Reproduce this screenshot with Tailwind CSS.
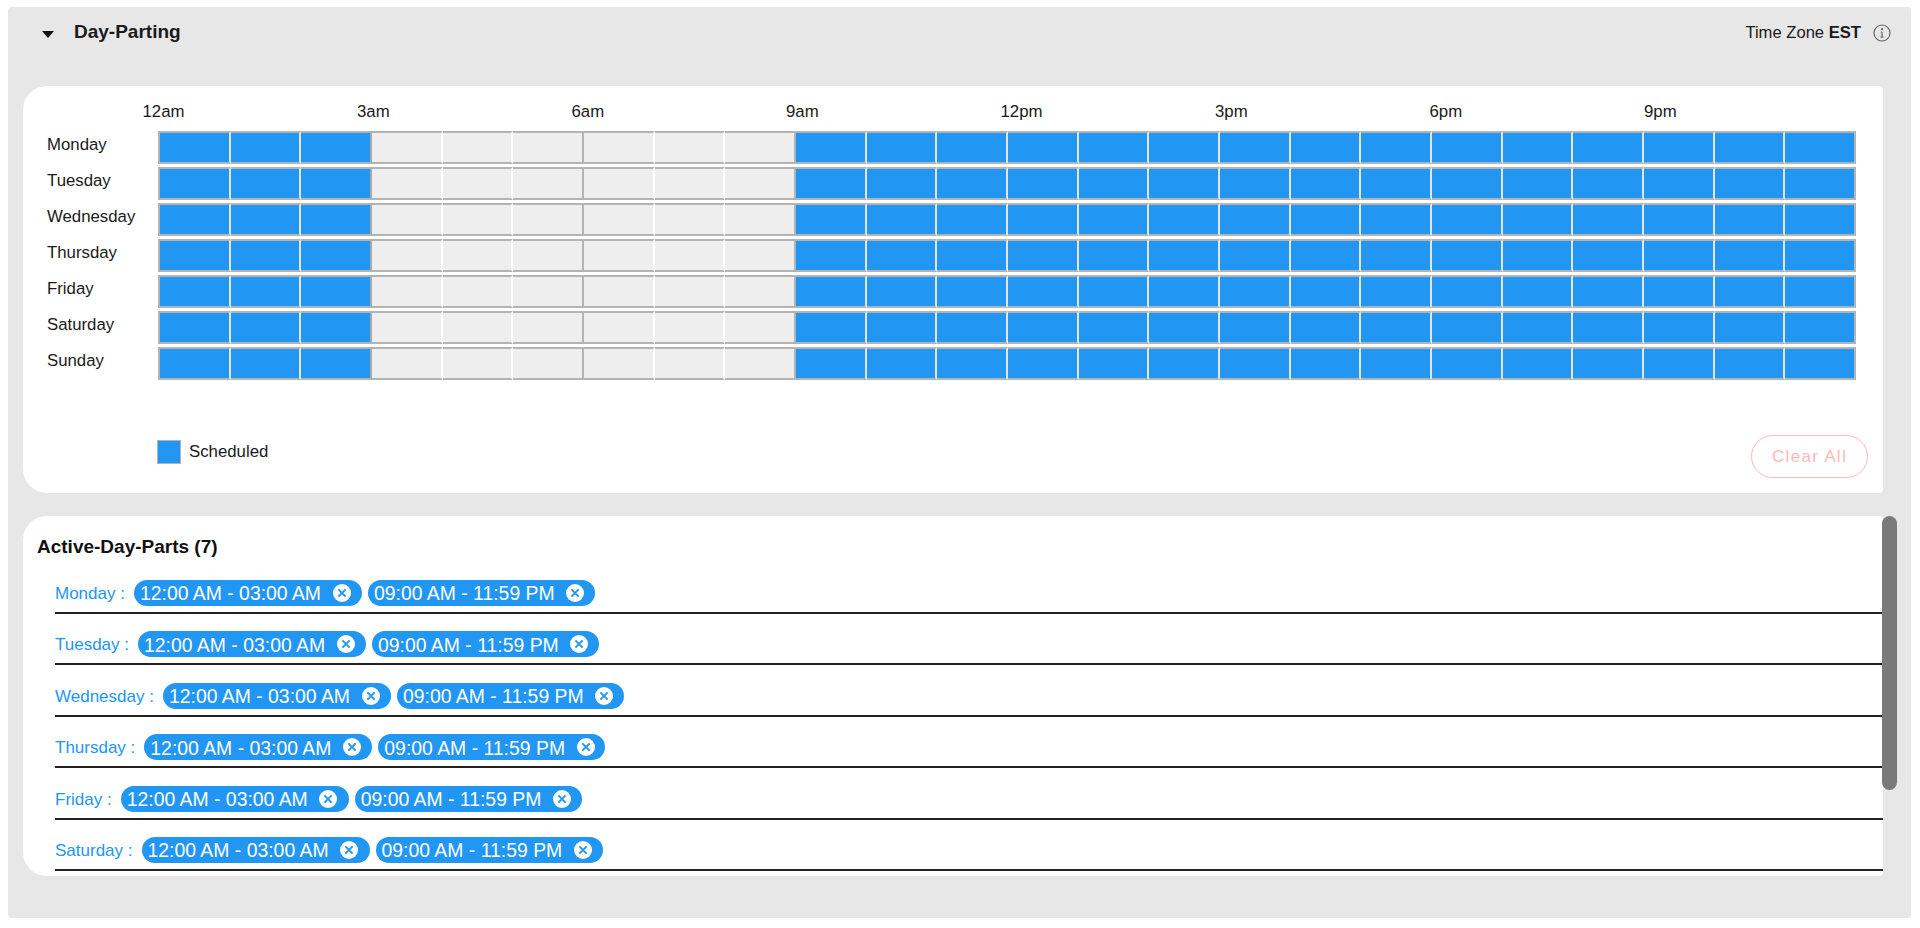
<!DOCTYPE html>
<html>
<head>
<meta charset="utf-8">
<script src="https://cdn.jsdelivr.net/npm/@tailwindcss/browser@4"></script>
</head>
<body class="bg-white font-['Liberation_Sans',Arial,sans-serif] text-[16.8px] text-[#1a1a1a] overflow-hidden">
<div class="relative mt-[7px] ml-[8px] w-[1903px] h-[911px] bg-[#e7e7e7] rounded-[4px]">
  <header class="flex items-center justify-between h-[50px] pl-[34px] pr-[20px]">
    <div class="flex items-center gap-[20px]">
      <svg class="w-[12px] h-[7px] mt-[4px]" viewBox="0 0 12 7"><path d="M0 0H12L6 7Z" fill="#111"/></svg>
      <span class="text-[19px] font-bold leading-[24px] -mt-[1px]">Day-Parting</span>
    </div>
    <div class="flex items-center gap-[12px] mt-[2px]">
      <span class="leading-[20px] text-[16.6px]">Time Zone <b>EST</b></span>
      <svg class="w-[18px] h-[18px]" viewBox="0 0 18 18" fill="none" stroke="#666" stroke-width="1.2"><circle cx="9" cy="9" r="8"/><path d="M9 8v5M7.6 13.2h2.8M7.8 8h1.2"/><circle cx="9" cy="5.2" r=".5" fill="#666"/></svg>
    </div>
  </header>

  <section class="relative mt-[29px] ml-[15px] w-[1860px] h-[407px] bg-white rounded-l-[24px] rounded-r-[4px] pt-[16px]">
    <div class="flex pl-[119.5px] h-[20px] leading-[20px]">
      <span class="w-[214.5px]">12am</span><span class="w-[214.5px]">3am</span><span class="w-[214.5px]">6am</span><span class="w-[214.5px]">9am</span><span class="w-[214.5px]">12pm</span><span class="w-[214.5px]">3pm</span><span class="w-[214.5px]">6pm</span><span class="w-[214.5px]">9pm</span>
    </div>
    <div class="mt-[9px] flex flex-col gap-[3px] pl-[24px]">
      <div class="flex h-[33px]"><span class="w-[111px] leading-[28px]">Monday</span><div class="w-[1698px] flex border-l-2 border-[#b4b4b4] [&>i]:flex-1 [&>i]:bg-[#2196f3] [&>i]:border-y-2 [&>i]:border-y-[#b4b4b4] [&>i]:border-r-2 [&>i]:border-r-[#e4e4e4] [&>u]:flex-1 [&>u]:bg-[#eeeeee] [&>u]:border-y-2 [&>u]:border-y-[#b4b4b4] [&>u]:border-r-2 [&>u]:border-r-white"><i></i><i></i><i class="border-r-[#a8a8a8]!"></i><u></u><u></u><u class="border-r-[#b4b4b4]!"></u><u></u><u></u><u class="border-r-[#b4b4b4]!"></u><i></i><i></i><i></i><i></i><i></i><i></i><i></i><i></i><i></i><i></i><i></i><i></i><i></i><i></i><i class="border-r-[#b4b4b4]!"></i></div></div>
      <div class="flex h-[33px]"><span class="w-[111px] leading-[28px]">Tuesday</span><div class="w-[1698px] flex border-l-2 border-[#b4b4b4] [&>i]:flex-1 [&>i]:bg-[#2196f3] [&>i]:border-y-2 [&>i]:border-y-[#b4b4b4] [&>i]:border-r-2 [&>i]:border-r-[#e4e4e4] [&>u]:flex-1 [&>u]:bg-[#eeeeee] [&>u]:border-y-2 [&>u]:border-y-[#b4b4b4] [&>u]:border-r-2 [&>u]:border-r-white"><i></i><i></i><i class="border-r-[#a8a8a8]!"></i><u></u><u></u><u class="border-r-[#b4b4b4]!"></u><u></u><u></u><u class="border-r-[#b4b4b4]!"></u><i></i><i></i><i></i><i></i><i></i><i></i><i></i><i></i><i></i><i></i><i></i><i></i><i></i><i></i><i class="border-r-[#b4b4b4]!"></i></div></div>
      <div class="flex h-[33px]"><span class="w-[111px] leading-[28px]">Wednesday</span><div class="w-[1698px] flex border-l-2 border-[#b4b4b4] [&>i]:flex-1 [&>i]:bg-[#2196f3] [&>i]:border-y-2 [&>i]:border-y-[#b4b4b4] [&>i]:border-r-2 [&>i]:border-r-[#e4e4e4] [&>u]:flex-1 [&>u]:bg-[#eeeeee] [&>u]:border-y-2 [&>u]:border-y-[#b4b4b4] [&>u]:border-r-2 [&>u]:border-r-white"><i></i><i></i><i class="border-r-[#a8a8a8]!"></i><u></u><u></u><u class="border-r-[#b4b4b4]!"></u><u></u><u></u><u class="border-r-[#b4b4b4]!"></u><i></i><i></i><i></i><i></i><i></i><i></i><i></i><i></i><i></i><i></i><i></i><i></i><i></i><i></i><i class="border-r-[#b4b4b4]!"></i></div></div>
      <div class="flex h-[33px]"><span class="w-[111px] leading-[28px]">Thursday</span><div class="w-[1698px] flex border-l-2 border-[#b4b4b4] [&>i]:flex-1 [&>i]:bg-[#2196f3] [&>i]:border-y-2 [&>i]:border-y-[#b4b4b4] [&>i]:border-r-2 [&>i]:border-r-[#e4e4e4] [&>u]:flex-1 [&>u]:bg-[#eeeeee] [&>u]:border-y-2 [&>u]:border-y-[#b4b4b4] [&>u]:border-r-2 [&>u]:border-r-white"><i></i><i></i><i class="border-r-[#a8a8a8]!"></i><u></u><u></u><u class="border-r-[#b4b4b4]!"></u><u></u><u></u><u class="border-r-[#b4b4b4]!"></u><i></i><i></i><i></i><i></i><i></i><i></i><i></i><i></i><i></i><i></i><i></i><i></i><i></i><i></i><i class="border-r-[#b4b4b4]!"></i></div></div>
      <div class="flex h-[33px]"><span class="w-[111px] leading-[28px]">Friday</span><div class="w-[1698px] flex border-l-2 border-[#b4b4b4] [&>i]:flex-1 [&>i]:bg-[#2196f3] [&>i]:border-y-2 [&>i]:border-y-[#b4b4b4] [&>i]:border-r-2 [&>i]:border-r-[#e4e4e4] [&>u]:flex-1 [&>u]:bg-[#eeeeee] [&>u]:border-y-2 [&>u]:border-y-[#b4b4b4] [&>u]:border-r-2 [&>u]:border-r-white"><i></i><i></i><i class="border-r-[#a8a8a8]!"></i><u></u><u></u><u class="border-r-[#b4b4b4]!"></u><u></u><u></u><u class="border-r-[#b4b4b4]!"></u><i></i><i></i><i></i><i></i><i></i><i></i><i></i><i></i><i></i><i></i><i></i><i></i><i></i><i></i><i class="border-r-[#b4b4b4]!"></i></div></div>
      <div class="flex h-[33px]"><span class="w-[111px] leading-[28px]">Saturday</span><div class="w-[1698px] flex border-l-2 border-[#b4b4b4] [&>i]:flex-1 [&>i]:bg-[#2196f3] [&>i]:border-y-2 [&>i]:border-y-[#b4b4b4] [&>i]:border-r-2 [&>i]:border-r-[#e4e4e4] [&>u]:flex-1 [&>u]:bg-[#eeeeee] [&>u]:border-y-2 [&>u]:border-y-[#b4b4b4] [&>u]:border-r-2 [&>u]:border-r-white"><i></i><i></i><i class="border-r-[#a8a8a8]!"></i><u></u><u></u><u class="border-r-[#b4b4b4]!"></u><u></u><u></u><u class="border-r-[#b4b4b4]!"></u><i></i><i></i><i></i><i></i><i></i><i></i><i></i><i></i><i></i><i></i><i></i><i></i><i></i><i></i><i class="border-r-[#b4b4b4]!"></i></div></div>
      <div class="flex h-[33px]"><span class="w-[111px] leading-[28px]">Sunday</span><div class="w-[1698px] flex border-l-2 border-[#b4b4b4] [&>i]:flex-1 [&>i]:bg-[#2196f3] [&>i]:border-y-2 [&>i]:border-y-[#b4b4b4] [&>i]:border-r-2 [&>i]:border-r-[#e4e4e4] [&>u]:flex-1 [&>u]:bg-[#eeeeee] [&>u]:border-y-2 [&>u]:border-y-[#b4b4b4] [&>u]:border-r-2 [&>u]:border-r-white"><i></i><i></i><i class="border-r-[#a8a8a8]!"></i><u></u><u></u><u class="border-r-[#b4b4b4]!"></u><u></u><u></u><u class="border-r-[#b4b4b4]!"></u><i></i><i></i><i></i><i></i><i></i><i></i><i></i><i></i><i></i><i></i><i></i><i></i><i></i><i></i><i class="border-r-[#b4b4b4]!"></i></div></div>
    </div>
    <div class="flex items-start justify-between mt-[55px] pl-[134px] pr-[15px]">
      <div class="flex items-center gap-[8px] mt-[5px]">
        <span class="block w-[24px] h-[24px] bg-[#2196f3] border border-[#b4b4b4]"></span>
        <span class="leading-[20px]">Scheduled</span>
      </div>
      <button class="w-[117px] h-[43px] pt-[1px] rounded-full border border-[#ffb8b8] text-[#ffb8b8] text-[17px] tracking-[1.3px] font-['Liberation_Sans',sans-serif]">Clear All</button>
    </div>
  </section>

  <section class="relative mt-[23px] ml-[15px] w-[1860px] h-[360px] bg-white rounded-l-[24px] rounded-r-[4px] overflow-hidden">
    <h2 class="pt-[20px] pl-[14px] text-[19px] font-bold leading-[22px] text-[#111]">Active-Day-Parts (7)</h2>
    <div class="mt-[4.6px] pl-[32px] flex flex-col">
      <div class="h-[51.4px] flex items-start gap-[9px] pt-[17.4px] border-b-2 border-[#222] box-border">
        <span class="text-[#2196f3] leading-[28px] text-[17px]">Monday :</span>
        <div class="flex gap-[6px]">
          <span class="flex items-center h-[26px] w-[228px] pl-[6px] pt-[2px] bg-[#2196f3] rounded-full text-white text-[19.4px]">12:00 AM - 03:00 AM<svg class="w-[18px] h-[18px] ml-[11.5px] shrink-0 -mt-[2px]" viewBox="0 0 18 18"><circle cx="9" cy="9" r="9" fill="#fff"/><path d="M5.4 5.4l7.2 7.2M12.6 5.4l-7.2 7.2" stroke="#2196f3" stroke-width="1.9"/></svg></span>
          <span class="flex items-center h-[26px] w-[227px] pl-[6px] pt-[2px] bg-[#2196f3] rounded-full text-white text-[19.4px]">09:00 AM - 11:59 PM<svg class="w-[18px] h-[18px] ml-[11.5px] shrink-0 -mt-[2px]" viewBox="0 0 18 18"><circle cx="9" cy="9" r="9" fill="#fff"/><path d="M5.4 5.4l7.2 7.2M12.6 5.4l-7.2 7.2" stroke="#2196f3" stroke-width="1.9"/></svg></span>
        </div>
      </div>
      <div class="h-[51.4px] flex items-start gap-[9px] pt-[17.4px] border-b-2 border-[#222] box-border">
        <span class="text-[#2196f3] leading-[28px] text-[17px]">Tuesday :</span>
        <div class="flex gap-[6px]">
          <span class="flex items-center h-[26px] w-[228px] pl-[6px] pt-[2px] bg-[#2196f3] rounded-full text-white text-[19.4px]">12:00 AM - 03:00 AM<svg class="w-[18px] h-[18px] ml-[11.5px] shrink-0 -mt-[2px]" viewBox="0 0 18 18"><circle cx="9" cy="9" r="9" fill="#fff"/><path d="M5.4 5.4l7.2 7.2M12.6 5.4l-7.2 7.2" stroke="#2196f3" stroke-width="1.9"/></svg></span>
          <span class="flex items-center h-[26px] w-[227px] pl-[6px] pt-[2px] bg-[#2196f3] rounded-full text-white text-[19.4px]">09:00 AM - 11:59 PM<svg class="w-[18px] h-[18px] ml-[11.5px] shrink-0 -mt-[2px]" viewBox="0 0 18 18"><circle cx="9" cy="9" r="9" fill="#fff"/><path d="M5.4 5.4l7.2 7.2M12.6 5.4l-7.2 7.2" stroke="#2196f3" stroke-width="1.9"/></svg></span>
        </div>
      </div>
      <div class="h-[51.4px] flex items-start gap-[9px] pt-[17.4px] border-b-2 border-[#222] box-border">
        <span class="text-[#2196f3] leading-[28px] text-[17px]">Wednesday :</span>
        <div class="flex gap-[6px]">
          <span class="flex items-center h-[26px] w-[228px] pl-[6px] pt-[2px] bg-[#2196f3] rounded-full text-white text-[19.4px]">12:00 AM - 03:00 AM<svg class="w-[18px] h-[18px] ml-[11.5px] shrink-0 -mt-[2px]" viewBox="0 0 18 18"><circle cx="9" cy="9" r="9" fill="#fff"/><path d="M5.4 5.4l7.2 7.2M12.6 5.4l-7.2 7.2" stroke="#2196f3" stroke-width="1.9"/></svg></span>
          <span class="flex items-center h-[26px] w-[227px] pl-[6px] pt-[2px] bg-[#2196f3] rounded-full text-white text-[19.4px]">09:00 AM - 11:59 PM<svg class="w-[18px] h-[18px] ml-[11.5px] shrink-0 -mt-[2px]" viewBox="0 0 18 18"><circle cx="9" cy="9" r="9" fill="#fff"/><path d="M5.4 5.4l7.2 7.2M12.6 5.4l-7.2 7.2" stroke="#2196f3" stroke-width="1.9"/></svg></span>
        </div>
      </div>
      <div class="h-[51.4px] flex items-start gap-[9px] pt-[17.4px] border-b-2 border-[#222] box-border">
        <span class="text-[#2196f3] leading-[28px] text-[17px]">Thursday :</span>
        <div class="flex gap-[6px]">
          <span class="flex items-center h-[26px] w-[228px] pl-[6px] pt-[2px] bg-[#2196f3] rounded-full text-white text-[19.4px]">12:00 AM - 03:00 AM<svg class="w-[18px] h-[18px] ml-[11.5px] shrink-0 -mt-[2px]" viewBox="0 0 18 18"><circle cx="9" cy="9" r="9" fill="#fff"/><path d="M5.4 5.4l7.2 7.2M12.6 5.4l-7.2 7.2" stroke="#2196f3" stroke-width="1.9"/></svg></span>
          <span class="flex items-center h-[26px] w-[227px] pl-[6px] pt-[2px] bg-[#2196f3] rounded-full text-white text-[19.4px]">09:00 AM - 11:59 PM<svg class="w-[18px] h-[18px] ml-[11.5px] shrink-0 -mt-[2px]" viewBox="0 0 18 18"><circle cx="9" cy="9" r="9" fill="#fff"/><path d="M5.4 5.4l7.2 7.2M12.6 5.4l-7.2 7.2" stroke="#2196f3" stroke-width="1.9"/></svg></span>
        </div>
      </div>
      <div class="h-[51.4px] flex items-start gap-[9px] pt-[17.4px] border-b-2 border-[#222] box-border">
        <span class="text-[#2196f3] leading-[28px] text-[17px]">Friday :</span>
        <div class="flex gap-[6px]">
          <span class="flex items-center h-[26px] w-[228px] pl-[6px] pt-[2px] bg-[#2196f3] rounded-full text-white text-[19.4px]">12:00 AM - 03:00 AM<svg class="w-[18px] h-[18px] ml-[11.5px] shrink-0 -mt-[2px]" viewBox="0 0 18 18"><circle cx="9" cy="9" r="9" fill="#fff"/><path d="M5.4 5.4l7.2 7.2M12.6 5.4l-7.2 7.2" stroke="#2196f3" stroke-width="1.9"/></svg></span>
          <span class="flex items-center h-[26px] w-[227px] pl-[6px] pt-[2px] bg-[#2196f3] rounded-full text-white text-[19.4px]">09:00 AM - 11:59 PM<svg class="w-[18px] h-[18px] ml-[11.5px] shrink-0 -mt-[2px]" viewBox="0 0 18 18"><circle cx="9" cy="9" r="9" fill="#fff"/><path d="M5.4 5.4l7.2 7.2M12.6 5.4l-7.2 7.2" stroke="#2196f3" stroke-width="1.9"/></svg></span>
        </div>
      </div>
      <div class="h-[51.4px] flex items-start gap-[9px] pt-[17.4px] border-b-2 border-[#222] box-border">
        <span class="text-[#2196f3] leading-[28px] text-[17px]">Saturday :</span>
        <div class="flex gap-[6px]">
          <span class="flex items-center h-[26px] w-[228px] pl-[6px] pt-[2px] bg-[#2196f3] rounded-full text-white text-[19.4px]">12:00 AM - 03:00 AM<svg class="w-[18px] h-[18px] ml-[11.5px] shrink-0 -mt-[2px]" viewBox="0 0 18 18"><circle cx="9" cy="9" r="9" fill="#fff"/><path d="M5.4 5.4l7.2 7.2M12.6 5.4l-7.2 7.2" stroke="#2196f3" stroke-width="1.9"/></svg></span>
          <span class="flex items-center h-[26px] w-[227px] pl-[6px] pt-[2px] bg-[#2196f3] rounded-full text-white text-[19.4px]">09:00 AM - 11:59 PM<svg class="w-[18px] h-[18px] ml-[11.5px] shrink-0 -mt-[2px]" viewBox="0 0 18 18"><circle cx="9" cy="9" r="9" fill="#fff"/><path d="M5.4 5.4l7.2 7.2M12.6 5.4l-7.2 7.2" stroke="#2196f3" stroke-width="1.9"/></svg></span>
        </div>
      </div>
    </div>
  </section>
  <div class="absolute left-[1874px] top-[509px] w-[15px] h-[274px] rounded-full bg-[#7a7a7a]"></div>
</div>
</body>
</html>
